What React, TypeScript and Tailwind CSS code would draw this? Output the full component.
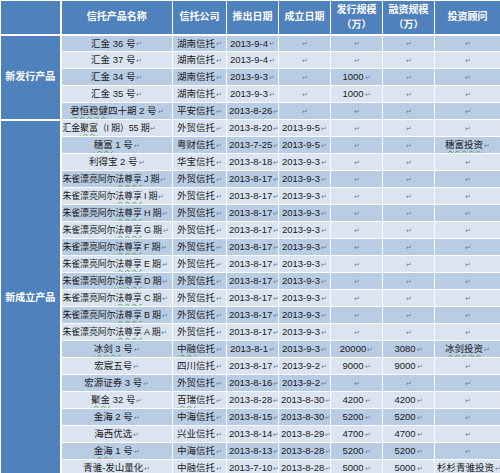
import React from "react";

type Row = {
  name: string;
  co: string;
  launch: string;
  est: string;
  issue: string;
  fin: string;
  adv: string;
  tight?: boolean;
};

const zhuque = ["J", "I", "H", "G", "F", "E", "D", "C", "B", "A"].map<Row>((l) => ({
  name: `朱雀漂亮阿尔~法尊享~ ${l} 期`,
  co: "外贸信托",
  launch: "2013-8-17",
  est: "2013-9-3",
  issue: "",
  fin: "",
  adv: "",
  tight: true,
}));

const newRows: Row[] = [
  { name: "汇金 36 号", co: "湖南信托", launch: "2013-9-4", est: "", issue: "", fin: "", adv: "" },
  { name: "汇金 37 号", co: "湖南信托", launch: "2013-9-4", est: "", issue: "", fin: "", adv: "" },
  { name: "汇金 34 号", co: "湖南信托", launch: "2013-9-3", est: "", issue: "1000", fin: "", adv: "" },
  { name: "汇金 35 号", co: "湖南信托", launch: "2013-9-3", est: "", issue: "1000", fin: "", adv: "" },
  { name: "~君恒稳健~四十期 2 号", co: "平安信托", launch: "2013-8-26", est: "", issue: "", fin: "", adv: "" },
];

const estRows: Row[] = [
  { name: "汇金~聚富~（I 期）55 期", co: "外贸信托", launch: "2013-8-20", est: "2013-9-5", issue: "", fin: "", adv: "", tight: true },
  { name: "~穗富~ 1 号", co: "粤财信托", launch: "2013-7-25", est: "2013-9-5", issue: "", fin: "", adv: "~穗富投资~" },
  { name: "利得宝 2 号", co: "华宝信托", launch: "2013-8-18", est: "2013-9-3", issue: "", fin: "", adv: "" },
  ...zhuque,
  { name: "~冰剑 3~ 号", co: "~中融~信托", launch: "2013-8-1", est: "2013-9-3", issue: "20000", fin: "3080", adv: "~冰剑投资~" },
  { name: "宏宸五号", co: "四川信托", launch: "2013-8-17", est: "2013-9-2", issue: "9000", fin: "9000", adv: "" },
  { name: "宏源证券 3 号", co: "外贸信托", launch: "2013-8-16", est: "2013-9-2", issue: "", fin: "", adv: "" },
  { name: "~聚金~ 32 号", co: "~百瑞~信托", launch: "2013-8-28", est: "2013-8-30", issue: "4200", fin: "4200", adv: "" },
  { name: "金海 2 号", co: "中海信托", launch: "2013-8-15", est: "2013-8-30", issue: "5200", fin: "5200", adv: "" },
  { name: "海西优选", co: "兴业信托", launch: "2013-8-14", est: "2013-8-29", issue: "4700", fin: "4700", adv: "" },
  { name: "~金海~ 1 号", co: "中海信托", launch: "2013-8-13", est: "2013-8-28", issue: "5200", fin: "5200", adv: "" },
  { name: "青骓-发山量化", co: "~中融~信托", launch: "2013-7-10", est: "2013-8-28", issue: "5000", fin: "5000", adv: "杉杉青骓投资" },
];

const Mark = () => (
  <span className="text-[7px] leading-none text-[#6f7f96] ml-[1px] align-middle">↵</span>
);

function Rich({ text }: { text: string }) {
  const parts = text.split("~");
  return (
    <>
      {parts.map((p, i) =>
        i % 2 === 1 ? (
          <span
            key={i}
            className="underline decoration-wavy decoration-[#5aa85a] decoration-1 underline-offset-[2px]"
          >
            {p}
          </span>
        ) : (
          <React.Fragment key={i}>{p}</React.Fragment>
        )
      )}
    </>
  );
}

function Cell({ text, tight = false }: { text: string; tight?: boolean }) {
  return (
    <td
      className={`border border-white py-0 whitespace-nowrap overflow-hidden text-[#1a1a1a] ${
        tight ? "text-left px-[1px] text-[9px] tracking-[-0.2px]" : "text-center px-[2px]"
      }`}
    >
      <Rich text={text} />
      <Mark />
    </td>
  );
}

export default function App() {
  const all = [...newRows, ...estRows];
  return (
    <div
      className="w-[500px] h-[473px] overflow-hidden bg-white"
      style={{ fontFamily: '"Liberation Sans", "Noto Sans CJK SC", sans-serif' }}
    >
      <table className="w-[500px] table-fixed border-collapse text-[9.5px] leading-none">
        <colgroup>
          <col className="w-[60px]" />
          <col className="w-[112px]" />
          <col className="w-[54px]" />
          <col className="w-[52px]" />
          <col className="w-[52px]" />
          <col className="w-[52px]" />
          <col className="w-[52px]" />
          <col className="w-[66px]" />
        </colgroup>
        <thead>
          <tr className="h-[34px] bg-[#4f81bd] text-white font-bold text-[10px]">
            <th className="border border-white border-r-2 border-b-2"></th>
            <th className="border border-white border-b-2">信托产品名称</th>
            <th className="border border-white border-b-2">信托公司</th>
            <th className="border border-white border-b-2">推出日期</th>
            <th className="border border-white border-b-2">成立日期</th>
            <th className="border border-white border-b-2 leading-[15px]">
              发行规模
              <br />（万）
            </th>
            <th className="border border-white border-b-2 leading-[15px]">
              融资规模
              <br />（万）
            </th>
            <th className="border border-white border-b-2">投资顾问</th>
          </tr>
        </thead>
        <tbody>
          {all.map((r, i) => (
            <tr
              key={i}
              className={`h-[17px] ${i % 2 === 0 ? "bg-[#b8cce4]" : "bg-[#dbe5f1]"}`}
            >
              {i === 0 && (
                <td
                  rowSpan={newRows.length}
                  className="border border-white border-r-2 border-b-2 bg-[#4f81bd] text-white font-bold text-[10px] text-center"
                >
                  新发行产品
                </td>
              )}
              {i === newRows.length && (
                <td
                  rowSpan={estRows.length}
                  className="border border-white border-r-2 bg-[#4f81bd] text-white font-bold text-[10px] text-center"
                >
                  新成立产品
                </td>
              )}
              <Cell text={r.name} tight={r.tight} />
              <Cell text={r.co} />
              <Cell text={r.launch} />
              <Cell text={r.est} />
              <Cell text={r.issue} />
              <Cell text={r.fin} />
              <Cell text={r.adv} />
            </tr>
          ))}
        </tbody>
      </table>
    </div>
  );
}
